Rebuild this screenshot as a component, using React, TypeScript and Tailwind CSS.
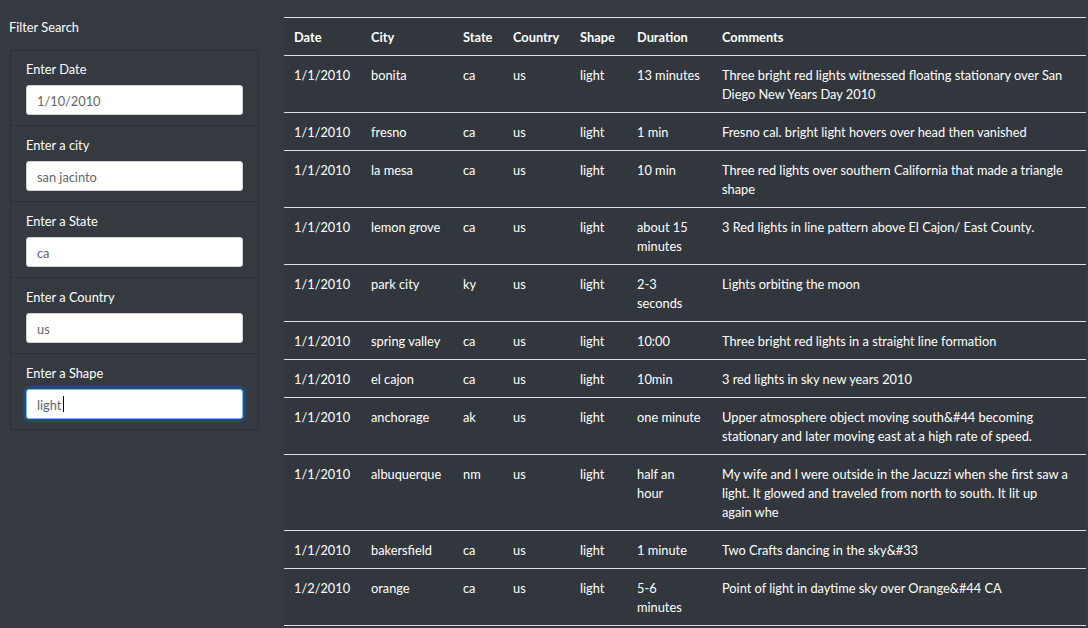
import React from 'react';

type Sighting = {
  date: string;
  city: string;
  state: string;
  country: string;
  shape: string;
  duration: string;
  comments: string;
};

const sightings: Sighting[] = [
  { date: '1/1/2010', city: 'bonita', state: 'ca', country: 'us', shape: 'light', duration: '13 minutes', comments: 'Three bright red lights witnessed floating stationary over San Diego New Years Day 2010' },
  { date: '1/1/2010', city: 'fresno', state: 'ca', country: 'us', shape: 'light', duration: '1 min', comments: 'Fresno cal. bright light hovers over head then vanished' },
  { date: '1/1/2010', city: 'la mesa', state: 'ca', country: 'us', shape: 'light', duration: '10 min', comments: 'Three red lights over southern California that made a triangle shape' },
  { date: '1/1/2010', city: 'lemon grove', state: 'ca', country: 'us', shape: 'light', duration: 'about 15 minutes', comments: '3 Red lights in line pattern above El Cajon/ East County.' },
  { date: '1/1/2010', city: 'park city', state: 'ky', country: 'us', shape: 'light', duration: '2-3 seconds', comments: 'Lights orbiting the moon' },
  { date: '1/1/2010', city: 'spring valley', state: 'ca', country: 'us', shape: 'light', duration: '10:00', comments: 'Three bright red lights in a straight line formation' },
  { date: '1/1/2010', city: 'el cajon', state: 'ca', country: 'us', shape: 'light', duration: '10min', comments: '3 red lights in sky new years 2010' },
  { date: '1/1/2010', city: 'anchorage', state: 'ak', country: 'us', shape: 'light', duration: 'one minute', comments: 'Upper atmosphere object moving south&#44 becoming stationary and later moving east at a high rate of speed.' },
  { date: '1/1/2010', city: 'albuquerque', state: 'nm', country: 'us', shape: 'light', duration: 'half an hour', comments: 'My wife and I were outside in the Jacuzzi when she first saw a light. It glowed and traveled from north to south. It lit up again whe' },
  { date: '1/1/2010', city: 'bakersfield', state: 'ca', country: 'us', shape: 'light', duration: '1 minute', comments: 'Two Crafts dancing in the sky&#33' },
  { date: '1/2/2010', city: 'orange', state: 'ca', country: 'us', shape: 'light', duration: '5-6 minutes', comments: 'Point of light in daytime sky over Orange&#44 CA' },
];

const filters = [
  { label: 'Enter Date', value: '1/10/2010' },
  { label: 'Enter a city', value: 'san jacinto' },
  { label: 'Enter a State', value: 'ca' },
  { label: 'Enter a Country', value: 'us' },
  { label: 'Enter a Shape', value: 'light', focused: true },
];

const font = 'Lato, "Liberation Sans", sans-serif';

export default function App() {
  return (
    <div
      className="w-[1088px] h-[628px] overflow-hidden bg-[#353a41] text-white text-[12.8px] leading-[19px] flex"
      style={{ fontFamily: font }}
    >
      {/* filters */}
      <div className="w-[284px] shrink-0 pl-[9px] pr-[25px] pt-[18px]">
        <div>Filter Search</div>
        <div className="mt-[13px] ml-[1px] w-[249px] rounded-[3px] border border-[#2b2f35]">
          {filters.map((f, i) => (
            <div
              key={f.label}
              className={`px-[15px] pb-[10px] ${i > 0 ? 'border-t border-[#2b2f35] pt-[10px]' : 'pt-[9px]'}`}
            >
              <div className="mb-[6px]">{f.label}</div>
              <div className="relative">
                <input
                  readOnly
                  value={f.value}
                  className={`w-[217px] h-[30px] rounded-[3px] bg-white px-[10px] pt-[1px] text-[#5f666d] text-[12.8px] outline-none border ${
                    f.focused
                      ? 'border-[#80bdff] shadow-[0_0_0_3px_rgba(0,123,255,0.25)]'
                      : 'border-[#ced4da]'
                  }`}
                  style={{ fontFamily: font }}
                />
                {f.focused && (
                  <span className="absolute left-[37px] top-[7px] w-[1px] h-[16px] bg-black" />
                )}
              </div>
            </div>
          ))}
        </div>
      </div>

      {/* results */}
      <div className="w-[802px] shrink-0 pt-[17px]">
        <table className="w-full table-fixed border-collapse bg-[#32373d]">
          <colgroup>
            <col className="w-[77px]" />
            <col className="w-[92px]" />
            <col className="w-[50px]" />
            <col className="w-[67px]" />
            <col className="w-[57px]" />
            <col className="w-[85px]" />
            <col />
          </colgroup>
          <thead>
            <tr className="text-left border-t border-b border-[#dee2e6]">
              {['Date', 'City', 'State', 'Country', 'Shape', 'Duration', 'Comments'].map((h) => (
                <th key={h} className="px-[10px] pt-[10px] pb-[8px] font-bold align-top">
                  {h}
                </th>
              ))}
            </tr>
          </thead>
          <tbody>
            {sightings.map((s, idx) => (
              <tr key={idx} className="border-b border-[#dee2e6]">
                <td className="px-[10px] pt-[10px] pb-[8px] align-top">{s.date}</td>
                <td className="px-[10px] pt-[10px] pb-[8px] align-top">{s.city}</td>
                <td className="px-[10px] pt-[10px] pb-[8px] align-top">{s.state}</td>
                <td className="px-[10px] pt-[10px] pb-[8px] align-top">{s.country}</td>
                <td className="px-[10px] pt-[10px] pb-[8px] align-top">{s.shape}</td>
                <td className="px-[10px] pt-[10px] pb-[8px] align-top">{s.duration}</td>
                <td className="pl-[10px] pr-[17px] pt-[10px] pb-[8px] align-top">{s.comments}</td>
              </tr>
            ))}
          </tbody>
        </table>
      </div>
    </div>
  );
}
